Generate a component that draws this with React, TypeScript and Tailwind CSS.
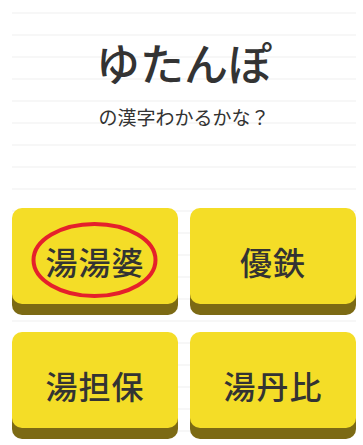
const CHOICES = ['湯湯婆', '優鉄', '湯担保', '湯丹比'];

function Choice({ label, marked }: { label: string; marked?: boolean }) {
  return (
    <button className="relative h-[96px] rounded-[10px] bg-[#f4dd27] shadow-[0_11px_0_#7c6a14] flex items-center justify-center pt-[10px] text-[32px] leading-none text-[#333] font-medium tracking-[1px]">
      {label}
      {marked && (
        <svg className="absolute left-0 top-0" width="166" height="96" viewBox="0 0 166 96">
          <ellipse cx="82.5" cy="52" rx="61" ry="36" fill="none" stroke="#e5202b" strokeWidth="4" />
        </svg>
      )}
    </button>
  );
}

export default function App() {
  return (
    <div className="min-h-[445px] bg-white px-3 pt-3 font-['Noto_Sans_CJK_JP','Noto_Sans',sans-serif] overflow-hidden">
      <div className="w-[344px] bg-[repeating-linear-gradient(to_bottom,#f7f7f7_0,#f7f7f7_2px,transparent_2px,transparent_22px)]">
        <h1 className="pt-[24px] text-center text-[44px] leading-[52px] font-medium text-[#333]">ゆたんぽ</h1>
        <p className="mt-[17px] text-center text-[19px] leading-[24px] text-[#333]">の漢字わかるかな？</p>
        <div className="mt-[79px] grid grid-cols-2 gap-x-3 gap-y-[28px] pb-4">
          {CHOICES.map((c, i) => (
            <Choice key={c} label={c} marked={i === 0} />
          ))}
        </div>
      </div>
    </div>
  );
}
